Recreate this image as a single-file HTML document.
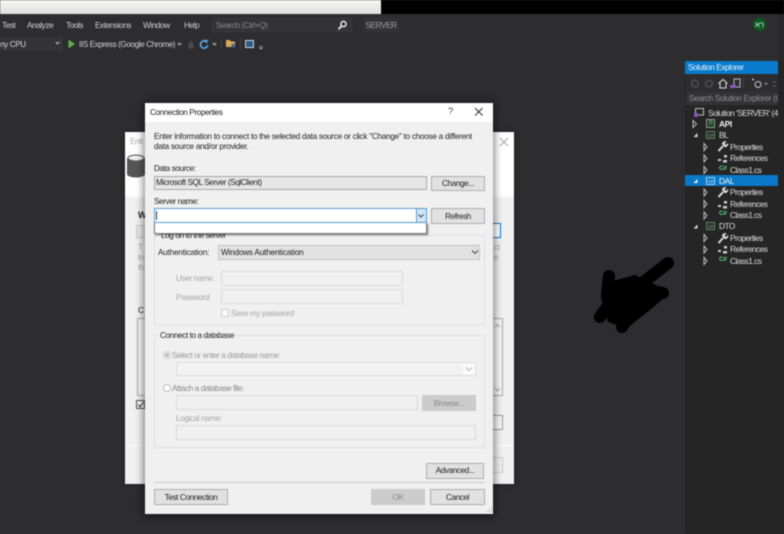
<!DOCTYPE html>
<html>
<head>
<meta charset="utf-8">
<style>
html,body{margin:0;padding:0;width:784px;height:534px;overflow:hidden;background:#2d2d30}
body{font-family:"Liberation Sans","Noto Sans CJK SC",sans-serif;font-size:8.2px;letter-spacing:-.4px;color:#222;position:relative}
#wrap{position:absolute;left:0;top:0;width:784px;height:534px;overflow:hidden;filter:blur(.4px)}
.a{position:absolute;box-sizing:border-box;white-space:nowrap}
.m{color:#d0d0d0}
.t{color:#dcdcdc;font-size:8.4px;letter-spacing:-.55px}
.dis{color:#a8a8a8}
.btn{position:absolute;box-sizing:border-box;background:#e1e1e1;border:1px solid #adadad;text-align:center;color:#222}
.inp{position:absolute;box-sizing:border-box;border:1px solid #d9d9d9;background:#f0f0f0}
.grp{position:absolute;box-sizing:border-box;border:1px solid #dfdfdf}
svg{position:absolute;overflow:visible}
</style>
</head>
<body>
<div id="wrap">
<!-- top strip -->
<div class="a" style="left:0;top:0;width:784px;height:14px;background:#000"></div>
<div class="a" style="left:0;top:0;width:381px;height:14px;background:linear-gradient(#f6f6f4,#dfdfdd)"></div>

<!-- menu -->
<div class="a m" style="left:2px;top:20.5px">Test</div>
<div class="a m" style="left:27px;top:20.5px">Analyze</div>
<div class="a m" style="left:66px;top:20.5px">Tools</div>
<div class="a m" style="left:95px;top:20.5px">Extensions</div>
<div class="a m" style="left:143px;top:20.5px">Window</div>
<div class="a m" style="left:184px;top:20.5px">Help</div>
<div class="a" style="left:212px;top:18px;width:140px;height:14px;background:#333337;border:1px solid #3a3a3e;color:#8a8a8a;padding-left:3px;line-height:13px">Search (Ctrl+Q)</div>
<svg style="left:337px;top:20px" width="11" height="11" viewBox="0 0 11 11"><circle cx="6.5" cy="4" r="2.6" fill="none" stroke="#e8e8e8" stroke-width="1.5"/><path d="M4.6 6 L1.5 9.2" stroke="#e8e8e8" stroke-width="1.8"/></svg>
<div class="a" style="left:363px;top:18px;width:36px;height:14px;background:#333336;color:#a0a0a0;text-align:center;line-height:15px">SERVER</div>
<div class="a" style="left:753px;top:18px;width:13px;height:13px;border-radius:50%;background:#0d5a22;color:#e8e8e8;font-size:7.5px;text-align:center;line-height:13px;letter-spacing:0">רא</div>

<!-- toolbar -->
<div class="a" style="left:0;top:37px;width:62px;height:14px;background:#333337;border-right:1px solid #434346;color:#d8d8d8;line-height:15px">ny CPU</div>
<svg style="left:55px;top:42px" width="6" height="4"><path d="M0 0H5L2.5 3Z" fill="#999"/></svg>
<svg style="left:68px;top:39px" width="8" height="10"><path d="M0.5 0.5 L7 5 L0.5 9.5Z" fill="#5fae4e"/></svg>
<div class="a m" style="left:79px;top:39.5px;letter-spacing:-.42px">IIS Express (Google Chrome)</div>
<svg style="left:177px;top:43px" width="6" height="4"><path d="M0 0H5L2.5 3Z" fill="#999"/></svg>
<svg style="left:187px;top:40px" width="8" height="9"><path d="M4 0 C5 3 7 4 7 6 A3 3 0 0 1 1 6 C1 4 3 3 4 0Z" fill="#4a4a4c"/></svg>
<svg style="left:199px;top:39px" width="10" height="11" viewBox="0 0 10 11"><path d="M7.8 3.2 A3.6 3.6 0 1 0 8.6 6.2" fill="none" stroke="#5aa8e8" stroke-width="1.6"/><path d="M5 0.5 L9 1 L8 4.8Z" fill="#5aa8e8"/></svg>
<svg style="left:212px;top:43px" width="6" height="4"><path d="M0 0H5L2.5 3Z" fill="#999"/></svg>
<div class="a" style="left:221px;top:38px;width:1px;height:12px;background:#46464a"></div>
<svg style="left:226px;top:39px" width="10" height="10"><path d="M0 1H4L5 2.5H9V8H0Z" fill="#d9a857"/><circle cx="7" cy="6.5" r="1.7" fill="#2d6fa8"/></svg>
<div class="a" style="left:240px;top:38px;width:1px;height:12px;background:#46464a"></div>
<div class="a" style="left:245px;top:40px;width:9px;height:8px;border:1px solid #c0d4e4;background:#2f5c80"></div>
<svg style="left:259px;top:46px" width="5" height="4"><path d="M0 0H4M0 1.5H4L2 3.5Z" stroke="#999" stroke-width=".5" fill="#999"/></svg>

<!-- solution explorer -->
<div class="a" style="left:778px;top:14px;width:6px;height:47px;background:#2a2829"></div>
<div class="a" style="left:685px;top:61px;width:99px;height:473px;background:#252526"></div>
<div class="a" style="left:685px;top:61px;width:93px;height:13px;background:#0a7acc;color:#eaf4fc;line-height:14px;padding-left:3px">Solution Explorer</div>
<div class="a" style="left:686px;top:74px;width:92px;height:18px;background:#2d2d30"></div>
<svg style="left:690px;top:78px" width="90" height="12" viewBox="0 0 90 12">
<circle cx="5" cy="5.5" r="3.4" fill="none" stroke="#555" stroke-width="1.2"/>
<circle cx="19" cy="5.5" r="3.4" fill="none" stroke="#555" stroke-width="1.2"/>
<path d="M28.5 5.5 L33 1.5 L37.5 5.5 M30 5 V10 H36 V5" fill="none" stroke="#d8d8d8" stroke-width="1.1"/>
<rect x="44" y="1" width="6" height="8" fill="none" stroke="#bbb" stroke-width="1"/><path d="M40 7H46V10H40Z" fill="#8a5cc0"/>
<path d="M53.5 0V10" stroke="#444" stroke-width="1"/>
<circle cx="68" cy="6.5" r="3" fill="none" stroke="#c8c8c8" stroke-width="1"/><circle cx="63" cy="1.5" r="1" fill="#c8c8c8"/>
<path d="M74 5H78L76 7Z" fill="#999"/>
<path d="M83 4H86M83 8H86" stroke="#666" stroke-width="1"/>
</svg>
<div class="a" style="left:686px;top:92px;width:92px;height:13px;background:#333337;color:#8f8f8f;line-height:14px;padding-left:3px;overflow:hidden;letter-spacing:-.35px">Search Solution Explorer (C</div>

<div class="a" style="left:685px;top:175px;width:93px;height:11px;background:#0a78c8"></div>

<svg style="left:694px;top:108px" width="11" height="10"><rect x="1.5" y=".5" width="8" height="6.5" fill="none" stroke="#bcbcbc"/><rect x="0" y="5" width="4" height="4" fill="#8a4fc0"/></svg>
<div class="a t" style="left:708px;top:108px;width:70px;overflow:hidden;letter-spacing:-.5px">Solution 'SERVER' (4 c</div>

<!-- arrows -->
<svg style="left:690px;top:118px" width="24" height="150" viewBox="0 0 24 150" fill="none" stroke="#bbb" stroke-width="1">
<path d="M3 2.5 L6.5 6 L3 9.5Z"/>
<path d="M3.5 19 H7.5 V15Z" fill="#ddd" stroke="none"/>
<path d="M14 25.5 L17 29 L14 32.5Z"/>
<path d="M14 37 L17 40.5 L14 44Z"/>
<path d="M14 48.5 L17 52 L14 55.5Z"/>
<path d="M3.5 65 H7.5 V61Z" fill="#f0f0f0" stroke="none"/>
<path d="M14 71 L17 74.5 L14 78Z"/>
<path d="M14 82.5 L17 86 L14 89.5Z"/>
<path d="M14 94 L17 97.5 L14 101Z"/>
<path d="M3.5 110.5 H7.5 V106.5Z" fill="#ddd" stroke="none"/>
<path d="M14 116.5 L17 120 L14 123.5Z"/>
<path d="M14 128 L17 131.5 L14 135Z"/>
<path d="M14 139.5 L17 143 L14 146.5Z"/>
</svg>

<!-- project icons -->
<div class="a" style="left:706px;top:119px;width:9px;height:9px;border:1px solid #8a9a8a;background:#2c4030;color:#6fc06f;font-size:5px;line-height:7px;text-align:center">⊕</div>
<div class="a" style="left:706px;top:131px;width:9px;height:8px;border:1px solid #5f8a5f;color:#90c090;font-size:4.5px;line-height:7px;text-align:center">C#</div>
<div class="a" style="left:706px;top:177px;width:9px;height:8px;border:1px solid #9fd0f0;color:#d8eefc;font-size:4.5px;line-height:7px;text-align:center">C#</div>
<div class="a" style="left:706px;top:222px;width:9px;height:8px;border:1px solid #5f8a5f;color:#90c090;font-size:4.5px;line-height:7px;text-align:center">C#</div>

<div class="a" style="left:719px;top:119px;color:#eee;font-weight:bold;font-size:8.4px">API</div>
<div class="a t" style="left:719px;top:130px">BL</div>
<div class="a" style="left:719px;top:176px;color:#f2f2f2;font-size:8.4px">DAL</div>
<div class="a t" style="left:719px;top:221px">DTO</div>

<svg style="left:717px;top:140px" width="12" height="125" viewBox="0 0 12 125" fill="none">
<path d="M1.5 11 L6 6" stroke="#ddd" stroke-width="2"/><path d="M5 4 A3 3 0 0 1 9.5 1.5 L7.5 3.5 L9 5 L11 3 A3 3 0 0 1 7.5 7Z" fill="#ddd"/>
<path d="M1.5 57 L6 52" stroke="#ddd" stroke-width="2"/><path d="M5 50 A3 3 0 0 1 9.5 47.5 L7.5 49.5 L9 51 L11 49 A3 3 0 0 1 7.5 53Z" fill="#ddd"/>
<path d="M1.5 103 L6 98" stroke="#ddd" stroke-width="2"/><path d="M5 96 A3 3 0 0 1 9.5 93.5 L7.5 95.5 L9 97 L11 95 A3 3 0 0 1 7.5 99Z" fill="#ddd"/>
<g fill="#ccc"><rect x="1" y="19" width="3" height="2"/><rect x="7" y="15" width="3" height="2.5"/><rect x="6" y="20" width="4" height="2.5"/>
<rect x="1" y="65" width="3" height="2"/><rect x="7" y="61" width="3" height="2.5"/><rect x="6" y="66" width="4" height="2.5"/>
<rect x="1" y="110" width="3" height="2"/><rect x="7" y="106" width="3" height="2.5"/><rect x="6" y="111" width="4" height="2.5"/></g>
</svg>
<div class="a t" style="left:730px;top:141.5px">Properties</div>
<div class="a t" style="left:730px;top:152.5px">References</div>
<div class="a t" style="left:730px;top:164.5px">Class1.cs</div>
<div class="a t" style="left:730px;top:186.5px">Properties</div>
<div class="a t" style="left:730px;top:198.5px">References</div>
<div class="a t" style="left:730px;top:209.5px">Class1.cs</div>
<div class="a t" style="left:730px;top:232.5px">Properties</div>
<div class="a t" style="left:730px;top:243.5px">References</div>
<div class="a t" style="left:730px;top:255.5px">Class1.cs</div>
<div class="a" style="left:719px;top:165px;color:#5fce7a;font-size:6.5px;font-weight:bold">C#</div>
<div class="a" style="left:719px;top:210px;color:#5fce7a;font-size:6.5px;font-weight:bold">C#</div>
<div class="a" style="left:719px;top:256px;color:#5fce7a;font-size:6.5px;font-weight:bold">C#</div>

<!-- scribble -->
<svg style="left:0;top:0" width="784" height="534" viewBox="0 0 784 534">
<g stroke="#000" stroke-width="12" stroke-linecap="round" fill="none">
<path d="M668 263 L640 285"/><path d="M609 276 L607 295"/><path d="M600 317 L612 300"/><path d="M622 327 L632 310"/><path d="M663 293 L645 290"/>
</g>
<path d="M605 283 L635 275 L660 287 L665 297 L650 310 L627 328 L608 322 L601 297Z" fill="#000"/>
</svg>

<!-- Entity dialog behind -->
<div class="a" style="left:125px;top:132px;width:389px;height:352px;background:#f0f0f0;box-shadow:0 0 4px rgba(0,0,0,.5)"></div>
<div class="a" style="left:125px;top:132px;width:389px;height:65px;background:#fff"></div>
<div class="a" style="left:130px;top:137px;color:#aaa">Enti</div>
<svg style="left:498px;top:136px" width="12" height="12"><path d="M2 2L10 10M10 2L2 10" stroke="#aaa" stroke-width="1.1"/></svg>
<svg style="left:127px;top:154px" width="18" height="24"><path d="M0 4 V20 A9 3.5 0 0 0 18 20 V4Z" fill="#555"/><ellipse cx="9" cy="4" rx="8" ry="3" fill="#eee" stroke="#555"/></svg>
<div class="a" style="left:138px;top:210px;font-weight:bold;font-size:9px">W</div>
<div class="a" style="left:136px;top:225px;width:365px;height:13px;background:#e8e8e8;border:1px solid #c8c8c8"></div>
<div class="a" style="left:490px;top:223px;width:11px;height:15px;border:1.5px solid #0a78d0;background:#fff"></div>
<div class="a dis" style="left:138px;top:243px">T</div>
<div class="a dis" style="left:138px;top:253px">to</div>
<div class="a dis" style="left:138px;top:263px">th</div>
<div class="a dis" style="left:494px;top:243px">ct</div>
<div class="a dis" style="left:494px;top:253px">e</div>
<div class="a" style="left:138px;top:306px">C</div>
<div class="a" style="left:137px;top:318px;width:366px;height:78px;background:#f4f4f4;border:1px solid #a8a8a8"></div>
<svg style="left:494px;top:322px" width="7" height="72"><path d="M1 5L3.5 2.5L6 5M1 66L3.5 69L6 66" fill="none" stroke="#aaa"/></svg>
<div class="a" style="left:136px;top:400px;width:9px;height:9px;border:1px solid #555;background:#f4f4f4"></div>
<svg style="left:136px;top:400px" width="9" height="9"><path d="M2 4.5 L4 7 L7.5 2" fill="none" stroke="#333" stroke-width="1"/></svg>
<div class="a" style="left:490px;top:415px;width:13px;height:15px;border:1px solid #999;background:#f4f4f4"></div>
<div class="a" style="left:125px;top:445px;width:389px;height:1px;background:#fafafa"></div>
<div class="a" style="left:490px;top:457px;width:13px;height:16px;border:1px solid #ccc;background:#eee"></div>

<!-- Connection Properties dialog -->
<div class="a" style="left:145px;top:103px;width:348px;height:411px;background:#f0f0f0;box-shadow:0 1px 7px 2px rgba(0,0,0,.45)"></div>
<div class="a" style="left:145px;top:103px;width:348px;height:19px;background:#fff"></div>
<div class="a" style="left:150px;top:108px">Connection Properties</div>
<div class="a" style="left:448px;top:106px;font-size:9.5px;color:#444">?</div>
<svg style="left:474px;top:107px" width="10" height="10"><path d="M1 1L8.5 8.5M8.5 1L1 8.5" stroke="#333" stroke-width="1"/></svg>
<div class="a" style="left:154px;top:131.5px;letter-spacing:-.27px">Enter information to connect to the selected data source or click "Change" to choose a different</div>
<div class="a" style="left:154px;top:141.5px;letter-spacing:-.27px">data source and/or provider.</div>

<div class="a" style="left:154px;top:164px">Data source:</div>
<div class="a" style="left:154px;top:176px;width:273px;height:14px;background:#e6e6e6;border:1px solid #a8a8a8;padding-left:1px;line-height:12px">Microsoft SQL Server (SqlClient)</div>
<div class="btn" style="left:431px;top:176px;width:54px;height:15px;line-height:13px">Change...</div>

<div class="a" style="left:154px;top:197px">Server name:</div>
<div class="a" style="left:154px;top:208px;width:273px;height:15px;background:#fff;border:1px solid #5a9fd8"></div>
<div class="a" style="left:156px;top:211px;width:1px;height:9px;background:#333"></div>
<div class="a" style="left:416px;top:209px;width:10px;height:13px;background:#cfe4f5;border-left:1px solid #5a9fd8"></div>
<svg style="left:418px;top:214px" width="6" height="4"><path d="M.5 .5L3 3L5.5 .5" fill="none" stroke="#444"/></svg>
<div class="btn" style="left:431px;top:208px;width:54px;height:16px;line-height:15px">Refresh</div>

<!-- Log on group -->
<div class="grp" style="left:154px;top:235px;width:331px;height:90px"></div>
<div class="a" style="left:160px;top:231px;background:#f0f0f0;padding:0 1px">Log on to the server</div>
<div class="a" style="left:154px;top:223px;width:273px;height:11px;background:#fff;border:1px solid #777;border-top:0;box-shadow:1px 1px 2px rgba(0,0,0,.5)"></div>

<div class="a" style="left:158px;top:248px;letter-spacing:-.2px">Authentication:</div>
<div class="a" style="left:218px;top:245px;width:262px;height:15px;background:#e1e1e1;border:1px solid #c4c4c4;line-height:14px;padding-left:2px;letter-spacing:-.2px">Windows Authentication</div>
<svg style="left:471px;top:250px" width="8" height="5"><path d="M1 .5L4 3.5L7 .5" fill="none" stroke="#444" stroke-width="1"/></svg>

<div class="a dis" style="left:176px;top:274px">User name:</div>
<div class="inp" style="left:221px;top:271px;width:182px;height:15px"></div>
<div class="a dis" style="left:176px;top:293px">Password:</div>
<div class="inp" style="left:221px;top:289px;width:182px;height:15px"></div>
<div class="a" style="left:221px;top:309px;width:8px;height:8px;background:#fafafa;border:1px solid #ccc"></div>
<div class="a dis" style="left:231px;top:309px">Save my password</div>

<!-- Database group -->
<div class="grp" style="left:154px;top:335px;width:331px;height:113px"></div>
<div class="a" style="left:159px;top:331px;background:#f0f0f0;padding:0 1px">Connect to a database</div>
<div class="a" style="left:163px;top:351px;width:8px;height:8px;border-radius:50%;border:1px solid #ccc;background:#f4f4f4"></div>
<div class="a" style="left:165px;top:353px;width:4px;height:4px;border-radius:50%;background:#bbb"></div>
<div class="a dis" style="left:172px;top:351px;color:#999">Select or enter a database name:</div>
<div class="a" style="left:176px;top:362px;width:300px;height:14px;background:#f2f2f2;border:1px solid #dcdcdc"></div>
<div class="a" style="left:463px;top:363px;width:12px;height:12px;background:#fafafa"></div>
<svg style="left:465px;top:367px" width="8" height="5"><path d="M1 .5L4 3.5L7 .5" fill="none" stroke="#bbb"/></svg>
<div class="a" style="left:163px;top:384px;width:8px;height:8px;border-radius:50%;border:1px solid #bbb;background:#fff"></div>
<div class="a" style="left:172px;top:384px;color:#888">Attach a database file:</div>
<div class="inp" style="left:176px;top:395px;width:242px;height:15px"></div>
<div class="btn" style="left:422px;top:395px;width:54px;height:16px;line-height:15px;background:#ccc;border-color:#c8c8c8;color:#8a8a8a">Browse...</div>
<div class="a dis" style="left:176px;top:414px">Logical name:</div>
<div class="inp" style="left:176px;top:425px;width:300px;height:15px"></div>

<div class="btn" style="left:426px;top:463px;width:58px;height:16px;line-height:14px">Advanced...</div>
<div class="a" style="left:154px;top:482px;width:331px;height:1px;background:#c9c9c9"></div>
<div class="btn" style="left:154px;top:489px;width:74px;height:16px;line-height:15px">Test Connection</div>
<div class="btn" style="left:371px;top:489px;width:54px;height:16px;line-height:15px;background:#ccc;border-color:#c8c8c8;color:#8a8a8a">OK</div>
<div class="btn" style="left:430px;top:489px;width:55px;height:16px;line-height:15px">Cancel</div>
<svg style="left:485px;top:506px" width="8" height="8"><g fill="#aaa"><rect x="6" y="1" width="1" height="1"/><rect x="4" y="3" width="1" height="1"/><rect x="6" y="3" width="1" height="1"/><rect x="2" y="5" width="1" height="1"/><rect x="4" y="5" width="1" height="1"/><rect x="6" y="5" width="1" height="1"/></g></svg>
</div>
</body>
</html>
